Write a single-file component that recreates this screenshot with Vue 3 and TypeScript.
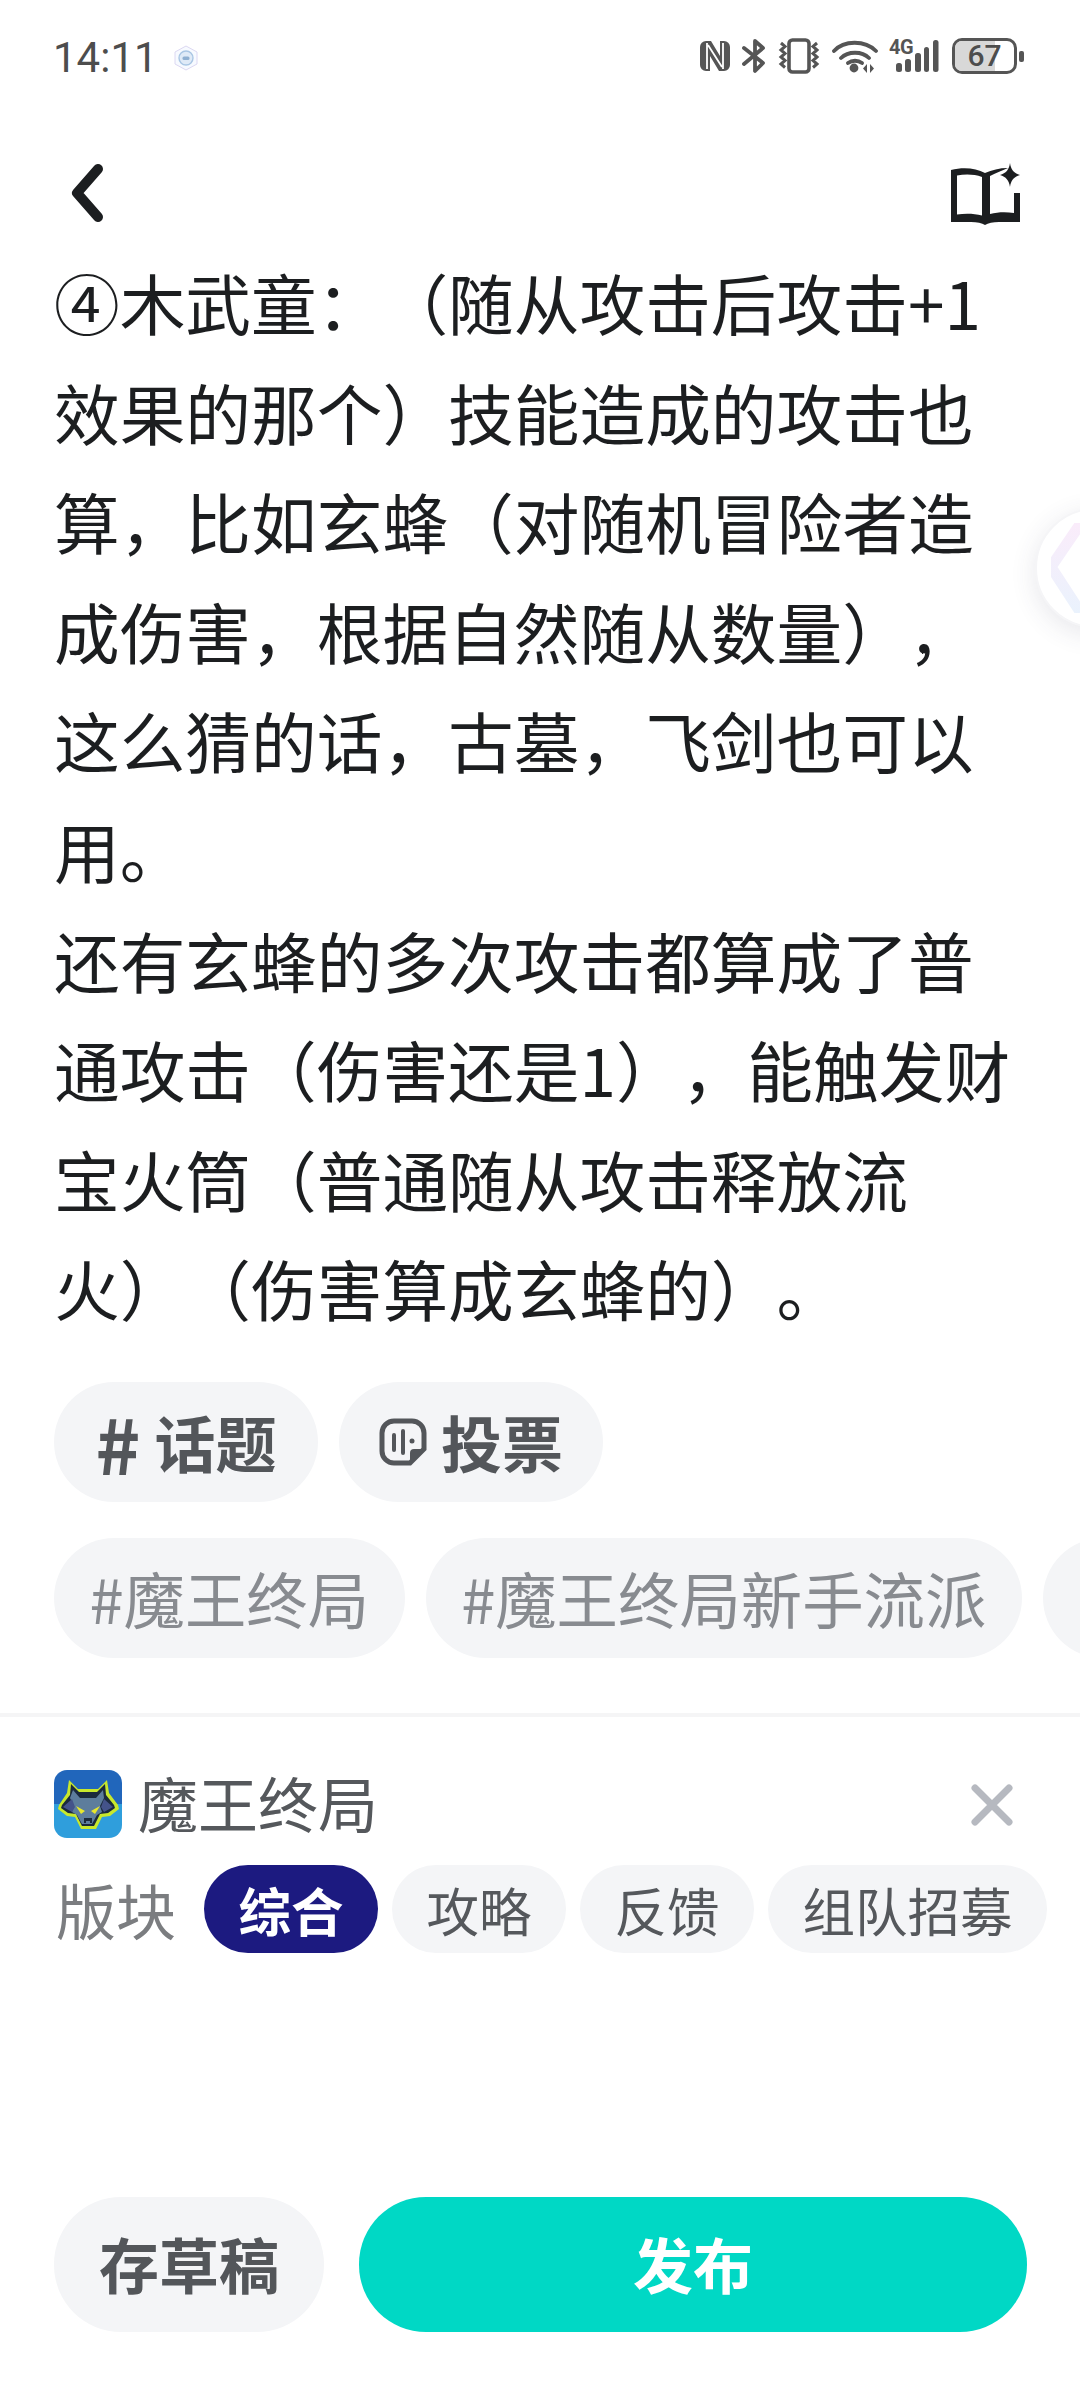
<script setup lang="ts">
const lines: string[] = [
  '④木武童：（随从攻击后攻击+1',
  '效果的那个）技能造成的攻击也',
  '算，比如玄蜂（对随机冒险者造',
  '成伤害，根据自然随从数量），',
  '这么猜的话，古墓，飞剑也可以',
  '用。',
  '还有玄蜂的多次攻击都算成了普',
  '通攻击（伤害还是1），能触发财',
  '宝火筒（普通随从攻击释放流',
  '火）（伤害算成玄蜂的）。',
]
const tags: string[] = ['#魔王终局', '#魔王终局新手流派', '#魔王终局攻略']
const boards: string[] = ['综合', '攻略', '反馈', '组队招募']
</script>

<template>
  <div class="page" lang="zh-CN">
    <header class="status">
      <div class="status-left">
        <span class="time">14:11</span>
        <svg class="hex" viewBox="0 0 26 26" width="26" height="26">
          <polygon points="13,1 24,7 24,19 13,25 2,19 2,7" fill="#f7faff" stroke="#dcd8f2" stroke-width="1" />
          <circle cx="13" cy="13" r="7" fill="#dfeaf7" stroke="#a9c6e4" stroke-width="1.4" />
          <rect x="9.5" y="11.5" width="7" height="3.5" rx="1.5" fill="#8fb0d2" />
        </svg>
      </div>
      <div class="status-right">
        <svg viewBox="0 0 32 32" width="32" height="32">
          <path d="M7 1h5l9 15V1h4a6 6 0 0 1 6 6v18a6 6 0 0 1-6 6h-5l-9-15v15H7a6 6 0 0 1-6-6V7a6 6 0 0 1 6-6z" fill="#555" />
          <path d="M8 3v26M24 3v26M9 5l14 22" stroke="#fff" stroke-width="1.8" fill="none" />
        </svg>
        <svg viewBox="0 0 24 36" width="24" height="36">
          <path d="M2 10l19 15-8 8V3l8 7L2 26" stroke="#555" stroke-width="3.8" fill="none" stroke-linecap="round" stroke-linejoin="round" />
        </svg>
        <svg viewBox="0 0 44 36" width="44" height="36">
          <rect x="12" y="2" width="20" height="32" rx="3.5" fill="none" stroke="#555" stroke-width="3.6" />
          <path d="M4 5l4 3.500-4 3.500 4 3.500-4 3.500 4 3.500-4 3.500 4 3.500M40 5l-4 3.500 4 3.500-4 3.500 4 3.500-4 3.500 4 3.500-4 3.500" fill="none" stroke="#555" stroke-width="3" />
        </svg>
        <svg viewBox="0 0 46 36" width="46" height="36">
          <path d="M2 13C12 2 33 2 44 13M9 20c7-7 21-7 28 0M16 25c4-3 10-3 14 0" fill="none" stroke="#555" stroke-width="3.8" stroke-linecap="round" />
          <circle cx="22" cy="30" r="4.400" fill="#555" />
          <path d="M35 26v9l-4-4.500zM38 26v9l4-4.500z" fill="#555" />
        </svg>
        <div class="signal">
          <span class="net">4G</span>
          <svg viewBox="0 0 50 34" width="50" height="34">
            <rect x="7" y="24" width="6" height="9" rx="2.500" fill="#555" />
            <rect x="16" y="20" width="6" height="13" rx="2.500" fill="#555" />
            <rect x="26" y="14" width="6" height="19" rx="2.500" fill="#555" />
            <rect x="35" y="8" width="5" height="25" rx="2.500" fill="#555" />
            <rect x="44" y="1" width="5.500" height="32" rx="2.500" fill="#555" />
          </svg>
        </div>
        <div class="battery">
          <div class="battery-body">
            <div class="battery-fill"></div>
            <span class="battery-num">67</span>
          </div>
          <div class="battery-nub"></div>
        </div>
      </div>
    </header>

    <nav class="nav">
      <svg viewBox="0 0 40 64" width="40" height="64">
        <path d="M30 6L9 30l21 24" fill="none" stroke="#1c1e20" stroke-width="10" stroke-linecap="round" stroke-linejoin="round" />
      </svg>
      <svg class="book" viewBox="0 0 70 62" width="70" height="62">
        <path d="M1 7c12-3 25-2 34 3 7-3 14-5 23-5-6 3-13 5-18 8v38c8-2 16-2 24-1V30h6v29H49c-6 0-11 1-14 3-3-2-8-3-14-3H1V7zm6 5.500v39c8-1 17-1 25 1V14c-8-3-17-3-25-1.500z" fill="#1c1e20" />
        <path d="M60 0c1 7 4 10 10 12-6 2-9 5-10 12-1-7-4-10-10-12 6-2 9-5 10-12z" fill="#1c1e20" />
      </svg>
    </nav>

    <article class="article">
      <p v-for="line in lines" :key="line" class="line">{{ line }}</p>
    </article>

    <div class="actions">
      <button class="chip strong" type="button">
        <span class="hash">#</span>
        <span>话题</span>
      </button>
      <button class="chip strong" type="button">
        <svg viewBox="0 0 48 48" width="48" height="48">
          <path d="M15 3h18a12 12 0 0 1 12 12v16L31 45H15A12 12 0 0 1 3 33V15A12 12 0 0 1 15 3z" fill="none" stroke="#53565a" stroke-width="5" />
          <path d="M31 45V35a4 4 0 0 1 4-4h10z" fill="#53565a" />
          <path d="M15 17v15M24 13v22" stroke="#53565a" stroke-width="4" stroke-linecap="round" />
          <circle cx="33" cy="23" r="2.500" fill="#53565a" />
        </svg>
        <span>投票</span>
      </button>
    </div>

    <div class="tags">
      <span v-for="tag in tags" :key="tag" class="chip light">{{ tag }}</span>
    </div>

    <div class="divider"></div>

    <section class="game">
      <div class="game-row">
        <svg class="game-icon" viewBox="0 0 68 68" width="68" height="68">
          <defs>
            <clipPath id="game-clip"><rect width="68" height="68" rx="13" /></clipPath>
          </defs>
          <g clip-path="url(#game-clip)">
            <rect width="68" height="34" fill="#2166bb" />
            <rect y="34" width="68" height="34" fill="#2f9edc" />
          </g>
          <path d="M15 10l9 9h20l9-9 2 13 9 12 1 4-9 7-8 1-6 12H27l-6-12-8-1-9-7 1-4 8-12z" fill="#c8e82c" />
          <path d="M17 14l8 8h18l8-8 1 11 8 10 1 3-7 5-8 1-6 12H28l-6-12-8-1-7-5 1-3 8-10z" fill="#1b2a3c" />
          <path d="M19 20l7 8h16l7-8 1 8-4 8 2 6-5 3-5 9H28l-5-9-5-3 2-6-4-8z" fill="#5d7d9c" />
          <path d="M9 37l9-8 3 8-3 5zM59 37l-9-8-3 8 3 5z" fill="#44538a" />
          <path d="M22 36l9 5-4 3zM46 36l-9 5 4 3z" fill="#e8e82c" />
          <path d="M30 48h8v5h-2v-2h-4v2h-2z" fill="#1b2a3c" />
        </svg>
        <span class="game-name">魔王终局</span>
        <svg class="close" viewBox="0 0 44 44" width="44" height="44">
          <path d="M5 5l34 34M39 5L5 39" stroke="#b6b9c0" stroke-width="7" stroke-linecap="round" />
        </svg>
      </div>
      <div class="board-row">
        <span class="board-label">版块</span>
        <span
          v-for="(board, i) in boards"
          :key="board"
          class="board"
          :class="{ active: i === 0 }"
        >{{ board }}</span>
      </div>
    </section>

    <footer class="footer">
      <button class="btn draft" type="button">存草稿</button>
      <button class="btn publish" type="button">发布</button>
    </footer>

    <div class="ball">
      <svg viewBox="0 0 60 90" width="60" height="90">
        <defs>
          <linearGradient id="ball-grad" x1="0" y1="0" x2="0" y2="1">
            <stop offset="0" stop-color="#f6dcf6" />
            <stop offset="1" stop-color="#d9e8fb" />
          </linearGradient>
        </defs>
        <path d="M30 0L0 44l30 46 30-10V10z" fill="none" stroke="url(#ball-grad)" stroke-width="11" opacity="0.55" />
        <path d="M36 34a18 18 0 0 1 24 0v22a18 18 0 0 1-24 0z" fill="#dce9fb" opacity="0.6" />
      </svg>
    </div>
  </div>
</template>

<style>
html,
body {
  margin: 0;
  background: #fff;
}
</style>

<style scoped>
.page {
  position: relative;
  width: 1080px;
  height: 2400px;
  overflow: hidden;
  display: flex;
  flex-direction: column;
  background: #fff;
  font-family: "Noto Sans CJK SC", "Noto Sans", sans-serif;
  color: #1c1e20;
  text-spacing-trim: space-all;
}
.status {
  height: 116px;
  flex: none;
  box-sizing: border-box;
  padding: 38px 56px 0 53px;
  display: flex;
  justify-content: space-between;
  align-items: flex-start;
}
.status-left {
  display: flex;
  align-items: center;
  gap: 15px;
  height: 40px;
}
.time {
  font-family: Roboto, sans-serif;
  font-size: 42px;
  line-height: 40px;
  color: #4d4d4d;
}
.status-right {
  display: flex;
  align-items: center;
  gap: 11px;
  height: 36px;
}
.signal {
  position: relative;
  width: 50px;
  height: 34px;
}
.net {
  position: absolute;
  left: 0;
  top: -1px;
  font-family: Roboto, sans-serif;
  font-weight: 700;
  font-size: 20px;
  line-height: 18px;
  letter-spacing: -0.5px;
  color: #555;
}
.battery {
  display: flex;
  align-items: center;
  gap: 2px;
  margin-left: 2px;
}
.battery-body {
  position: relative;
  box-sizing: border-box;
  width: 65px;
  height: 36px;
  border: 3px solid #555;
  border-radius: 10px;
  overflow: hidden;
  display: flex;
  align-items: center;
  justify-content: center;
}
.battery-fill {
  position: absolute;
  left: 0;
  top: 0;
  bottom: 0;
  width: 67%;
  background: #d8d8d8;
}
.battery-num {
  position: relative;
  font-family: Roboto, sans-serif;
  font-weight: 500;
  font-size: 30px;
  line-height: 30px;
  color: #4d4d4d;
}
.battery-nub {
  width: 5px;
  height: 11px;
  border-radius: 2px;
  background: #555;
}
.nav {
  height: 131px;
  flex: none;
  box-sizing: border-box;
  padding: 47px 60px 0 68px;
  display: flex;
  justify-content: space-between;
  align-items: flex-start;
}
.article {
  flex: none;
  padding-left: 54px;
  margin-bottom: 39px;
}
.line {
  margin: 0;
  font-size: 65.7px;
  line-height: 109.6px;
  white-space: nowrap;
  color: #1c1e20;
}
.actions,
.tags {
  flex: none;
  display: flex;
  gap: 21px;
  padding-left: 54px;
}
.actions {
  margin-bottom: 36px;
}
.chip {
  flex: none;
  box-sizing: border-box;
  height: 120px;
  border: 0;
  border-radius: 60px;
  background: #f4f5f7;
  display: inline-flex;
  align-items: center;
  justify-content: center;
  font-family: inherit;
  font-size: 61.4px;
  padding: 0 35.5px;
  white-space: nowrap;
}
.strong {
  width: 264px;
  padding: 0;
  gap: 14px;
  font-size: 61px;
  font-weight: 700;
  color: #53565a;
}
.hash {
  font-size: 76px;
  line-height: 60px;
}
.light {
  color: #888b90;
}
.divider {
  flex: none;
  height: 4px;
  margin-top: 55px;
  background: #f5f5f6;
}
.game {
  flex: none;
  padding: 53px 34px 0 54px;
}
.game-row {
  display: flex;
  align-items: center;
  height: 68px;
  gap: 16px;
}
.game-icon {
  flex: none;
}
.game-name {
  font-size: 60px;
  line-height: 68px;
  margin-bottom: 4px;
  color: #55585c;
}
.close {
  margin-left: auto;
  margin-right: 32px;
  margin-top: 3px;
  flex: none;
}
.board-row {
  display: flex;
  align-items: center;
  margin-top: 27px;
  gap: 14px;
}
.board-label {
  flex: none;
  white-space: nowrap;
  font-size: 60px;
  line-height: 88px;
  color: #7b7d80;
  margin: 0 14px 0 2px;
}
.board {
  flex: none;
  height: 88px;
  border-radius: 44px;
  padding: 0 34.5px;
  background: #f4f5f7;
  color: #55585c;
  font-size: 52.5px;
  line-height: 88px;
  white-space: nowrap;
}
.board.active {
  background: #1c1a80;
  color: #fff;
  font-weight: 700;
}
.footer {
  margin-top: auto;
  flex: none;
  display: flex;
  gap: 35px;
  padding: 0 53px 68px 54px;
}
.btn {
  height: 135px;
  border: 0;
  border-radius: 67px;
  font-family: inherit;
  font-size: 60px;
  font-weight: 700;
  padding: 0 0 4px;
}
.draft {
  width: 270px;
  flex: none;
  background: #f4f5f7;
  color: #53565a;
}
.publish {
  flex: 1;
  background: #00d8c5;
  color: #fff;
}
.ball {
  position: absolute;
  left: 1035px;
  top: 508px;
  width: 120px;
  height: 120px;
  border-radius: 50%;
  background: #fff;
  border: 2px solid #f5f5f7;
  box-sizing: border-box;
  box-shadow: 0 6px 26px rgba(60, 60, 90, 0.12);
  display: flex;
  align-items: center;
  padding-left: 14px;
}
</style>
